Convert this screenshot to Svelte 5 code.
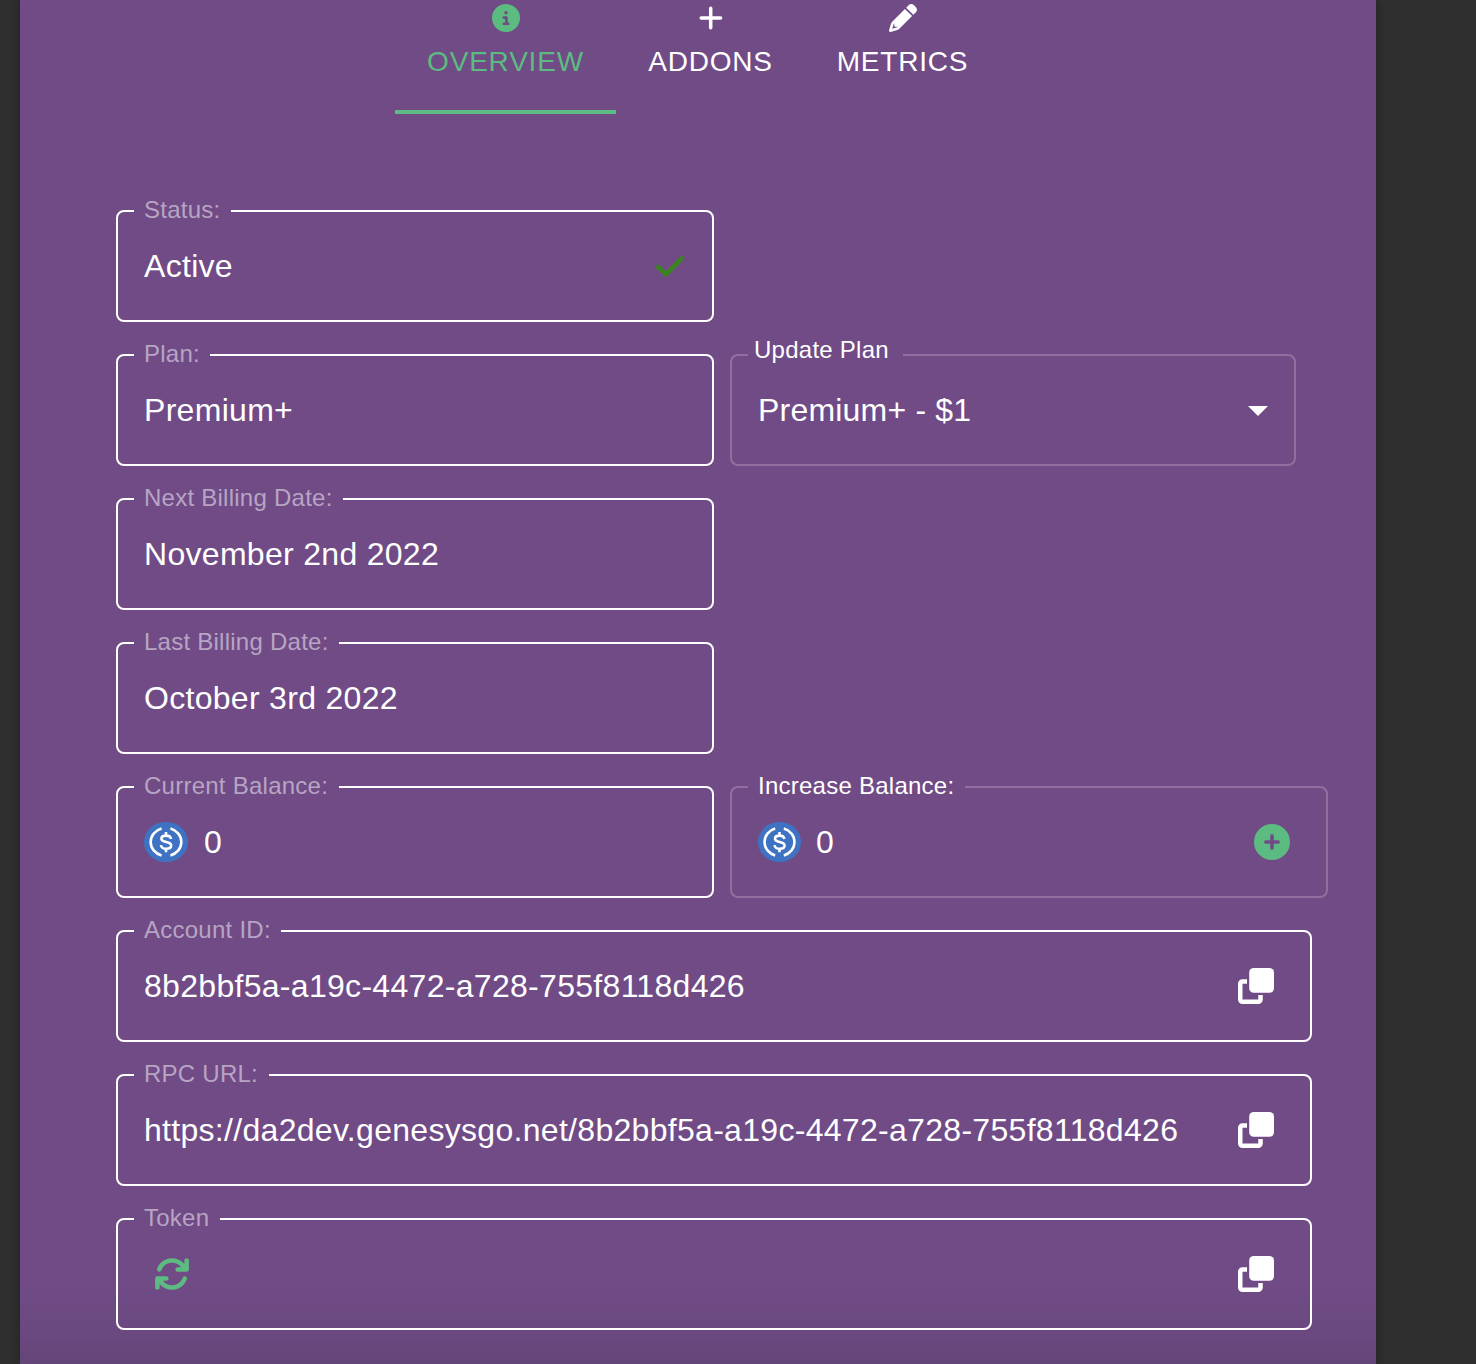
<script>
  const tabs = [
    { label: 'OVERVIEW', icon: 'info', active: true },
    { label: 'ADDONS', icon: 'plus', active: false },
    { label: 'METRICS', icon: 'pencil', active: false }
  ];

  const rows = [
    [{ label: 'Status:', value: 'Active', end: 'check' }],
    [
      { label: 'Plan:', value: 'Premium+' },
      { label: 'Update Plan', value: 'Premium+ - $1', kind: 'select', end: 'caret' }
    ],
    [{ label: 'Next Billing Date:', value: 'November 2nd 2022' }],
    [{ label: 'Last Billing Date:', value: 'October 3rd 2022' }],
    [
      { label: 'Current Balance:', value: '0', start: 'coin' },
      { label: 'Increase Balance:', value: '0', kind: 'input', start: 'coin', end: 'add' }
    ],
    [{ label: 'Account ID:', value: '8b2bbf5a-a19c-4472-a728-755f8118d426', kind: 'wide', end: 'copy' }],
    [{ label: 'RPC URL:', value: 'https://da2dev.genesysgo.net/8b2bbf5a-a19c-4472-a728-755f8118d426', kind: 'wide', end: 'copy' }],
    [{ label: 'Token', value: '', kind: 'wide', start: 'refresh', end: 'copy' }]
  ];
</script>

{#snippet icon(name)}
  {#if name === 'info'}
    <svg class="icon info" viewBox="0 0 512 512"><path d="M256 512A256 256 0 1 0 256 0a256 256 0 1 0 0 512zM216 336h24V272H216c-13.3 0-24-10.7-24-24s10.7-24 24-24h48c13.3 0 24 10.7 24 24v88h8c13.3 0 24 10.7 24 24s-10.7 24-24 24H216c-13.3 0-24-10.7-24-24s10.7-24 24-24zm40-208a32 32 0 1 1 0 64 32 32 0 1 1 0-64z" /></svg>
  {:else if name === 'plus'}
    <svg class="icon plus" viewBox="0 0 28 28"><path d="M13.700 4.300v19.400M4.200 14h19.400" /></svg>
  {:else if name === 'pencil'}
    <svg class="icon pencil" viewBox="0 0 512 512"><path fill-rule="evenodd" d="M421.7 220.3L188.5 453.4C178.1 463.8 165.2 471.5 151.1 475.6L30.8 511C22.4 513.5 13.2 511.2 7 505C.8 498.8-1.5 489.7 1 481.2L36.400 360.900C40.500 346.800 48.200 333.900 58.600 323.500L291.700 90.300L421.700 220.300zM82.400 374.400L59.400 452.600L137.600 429.600C144 427.700 149.800 424.200 154.600 419.500L158.100 416H112C103.200 416 96 408.800 96 400V353.900L92.500 357.400C87.800 362.200 84.300 368 82.400 374.400zM492.700 58.700C517.700 83.700 517.700 124.300 492.700 149.300L444.300 197.700L314.300 67.700L362.700 19.300C387.700-5.700 428.300-5.700 453.300 19.300L492.700 58.700z" /></svg>
  {:else if name === 'check'}
    <svg class="icon check" viewBox="0 0 28 21"><path d="M2.300 11L10 18.300L25.700 2.500" /></svg>
  {:else if name === 'caret'}
    <svg class="icon caret" viewBox="0 0 20 10"><path d="M0 0h20L10 10z" /></svg>
  {:else if name === 'coin'}
    <svg class="icon coin" viewBox="0 0 44 40" preserveAspectRatio="none">
      <ellipse cx="22" cy="20" rx="22" ry="20" />
      <path d="M17.600 6.600A15.400 14 0 0 0 17.600 33.400M26.400 6.600A15.400 14 0 0 1 26.400 33.400" />
      <path d="M22 10v3.500M22 26.800v3.500M27 17c-.4-2.300-2.100-3.400-4.900-3.400-2.900 0-4.700 1.100-4.700 3.100 0 4.600 9.800 2 9.800 6.900 0 2.100-2 3.200-5 3.200-3.200 0-4.900-1.200-5.300-3.700" />
    </svg>
  {:else if name === 'add'}
    <svg class="icon add" viewBox="0 0 36 36"><circle cx="18" cy="18" r="18" /><path d="M18 11.900v12.200M11.900 18h12.200" /></svg>
  {:else if name === 'copy'}
    <svg class="icon copy" viewBox="0 0 36 36"><rect x="11.200" y="0" width="24.800" height="24.700" rx="4.500" /><path d="M9 13.500H4.500A2.250 2.250 0 0 0 2.250 15.750V31.500A2.250 2.250 0 0 0 4.500 33.750H20.250A2.250 2.250 0 0 0 22.500 31.500V27" /></svg>
  {:else if name === 'refresh'}
    <svg class="icon refresh" viewBox="0 0 512 512"><path d="M105.1 202.6c7.7-21.8 20.2-42.3 37.8-59.8c62.5-62.5 163.8-62.5 226.3 0L386.3 160H336c-17.7 0-32 14.3-32 32s14.3 32 32 32H463.5h.4c17.7 0 32-14.3 32-32V64c0-17.7-14.3-32-32-32s-32 14.3-32 32v51.2L414.4 97.6c-87.5-87.5-229.3-87.5-316.8 0C73.2 122 55.600 150.700 44.800 181.400c-5.900 16.700 2.900 34.900 19.500 40.800s34.900-2.900 40.800-19.500zM39 289.3c-5 1.5-9.8 4.2-13.7 8.2c-4 4-6.7 8.8-8.1 14c-.3 1.2-.6 2.5-.8 3.8c-.3 1.7-.4 3.4-.4 5.1V448c0 17.7 14.3 32 32 32s32-14.3 32-32V396.900l17.600 17.500c87.500 87.400 229.300 87.400 316.700 0c24.400-24.400 42.100-53.100 52.900-83.700c5.900-16.700-2.900-34.900-19.500-40.800s-34.900 2.900-40.800 19.500c-7.700 21.800-20.200 42.300-37.800 59.800c-62.500 62.500-163.800 62.500-226.300 0l-.1-.1L125.600 352H176c17.700 0 32-14.3 32-32s-14.3-32-32-32H48.400c-1.600 0-3.200 .1-4.800 .3s-3.100 .5-4.600 1z" /></svg>
  {/if}
{/snippet}

<div class="page">
  <main class="panel">
    <nav class="tabs">
      {#each tabs as tab}
        <button class="tab" class:active={tab.active}>
          <span class="tab-icon">{@render icon(tab.icon)}</span>
          <span class="tab-label">{tab.label}</span>
        </button>
      {/each}
    </nav>

    <section class="rows">
      {#each rows as row}
        <div class="row">
          {#each row as field}
            <fieldset class="field {field.kind ?? 'plain'}">
              <legend><span>{field.label}</span></legend>
              <div class="content">
                {#if field.start}{@render icon(field.start)}{/if}
                <span class="value">{field.value}</span>
                {#if field.end}{@render icon(field.end)}{/if}
              </div>
            </fieldset>
          {/each}
        </div>
      {/each}
    </section>
  </main>
</div>

<style>
  :global(body) {
    margin: 0;
    background: #2f2f2f;
  }

  .page {
    height: 1364px;
    padding: 0 100px 0 20px;
    box-sizing: border-box;
    overflow: hidden;
    font-family: 'Liberation Sans', Arial, sans-serif;
    color: #fff;
  }

  .panel {
    height: 1364px;
    box-sizing: border-box;
    background: linear-gradient(#704b86 0 1284px, #6b4880 1335px, #644577 1364px);
    box-shadow: 0 0 10px rgba(0, 0, 0, 0.3);
  }

  .tabs {
    display: flex;
    height: 114px;
    padding-left: 375px;
  }

  .tab {
    display: flex;
    flex-direction: column;
    align-items: center;
    box-sizing: border-box;
    width: 189px;
    height: 114px;
    padding: 4px 0 0;
    border: 0;
    border-bottom: 4px solid transparent;
    background: none;
    color: #fff;
    font: 28px/36px 'Liberation Sans', Arial, sans-serif;
    letter-spacing: 0.8px;
    white-space: nowrap;
  }

  .tab:last-child {
    width: 195px;
  }

  .tab.active {
    width: 221px;
    color: #5cbb80;
    border-color: #5cbb80;
  }

  .tab-icon {
    display: flex;
    width: 28px;
    height: 28px;
    margin-bottom: 12px;
  }

  .rows {
    display: flex;
    flex-direction: column;
    gap: 32px;
    padding: 96px 0 0 96px;
  }

  .row {
    display: flex;
    gap: 16px;
    height: 112px;
  }

  .field {
    flex: none;
    box-sizing: border-box;
    width: 598px;
    height: 112px;
    min-width: 0;
    margin: 0;
    padding: 0 28px 0 16px;
    border: 2px solid #fff;
    border-radius: 8px;
  }

  .wide {
    width: 1196px;
    padding-right: 36px;
  }

  .select {
    width: 566px;
    padding-right: 26px;
  }

  .input {
    padding-right: 36px;
  }

  .select,
  .input {
    border-color: #8f709f;
  }

  legend {
    height: 2px;
    padding: 0 10.5px 0 10px;
    font-size: 24px;
    line-height: 28px;
    letter-spacing: 0.25px;
    color: #b7a5c3;
    white-space: nowrap;
  }

  legend span {
    display: block;
    margin-top: -14px;
  }

  .select legend,
  .input legend {
    color: #fff;
  }

  .select legend {
    padding: 0 14.5px 0 6px;
  }

  .select legend span {
    margin-top: -18px;
  }

  .content {
    display: flex;
    align-items: center;
    height: 108px;
    padding-left: 10px;
    font-size: 32px;
    line-height: 46px;
    letter-spacing: 0.3px;
    white-space: nowrap;
  }

  .select .content {
    letter-spacing: 0.2px;
  }

  .value {
    flex: 1;
  }

  .icon {
    display: block;
    flex: none;
    fill: currentColor;
  }

  .info,
  .plus,
  .pencil {
    width: 28px;
    height: 28px;
  }

  .plus path {
    stroke: currentColor;
    stroke-width: 3.5;
    stroke-linecap: round;
  }

  .check {
    width: 28px;
    height: 21px;
  }

  .check path {
    fill: none;
    stroke: #3a8420;
    stroke-width: 4.6;
    stroke-linecap: round;
    stroke-linejoin: round;
  }

  .caret {
    width: 20px;
    height: 10px;
    margin-top: 2px;
  }

  .coin {
    width: 44px;
    height: 40px;
    margin-right: 16px;
  }

  .input .coin {
    width: 43px;
    margin-right: 15px;
  }

  .coin ellipse {
    fill: #3e73c4;
  }

  .coin path {
    fill: none;
    stroke: #fff;
    stroke-width: 2.6;
  }

  .add,
  .copy,
  .refresh {
    width: 36px;
    height: 36px;
  }

  .add {
    color: #5cbb80;
  }

  .add path {
    stroke: #704b86;
    stroke-width: 3.6;
    stroke-linecap: round;
  }

  .copy path {
    fill: none;
    stroke: #fff;
    stroke-width: 4.5;
  }

  .refresh {
    margin-left: 10px;
    color: #5cbb80;
  }
</style>
